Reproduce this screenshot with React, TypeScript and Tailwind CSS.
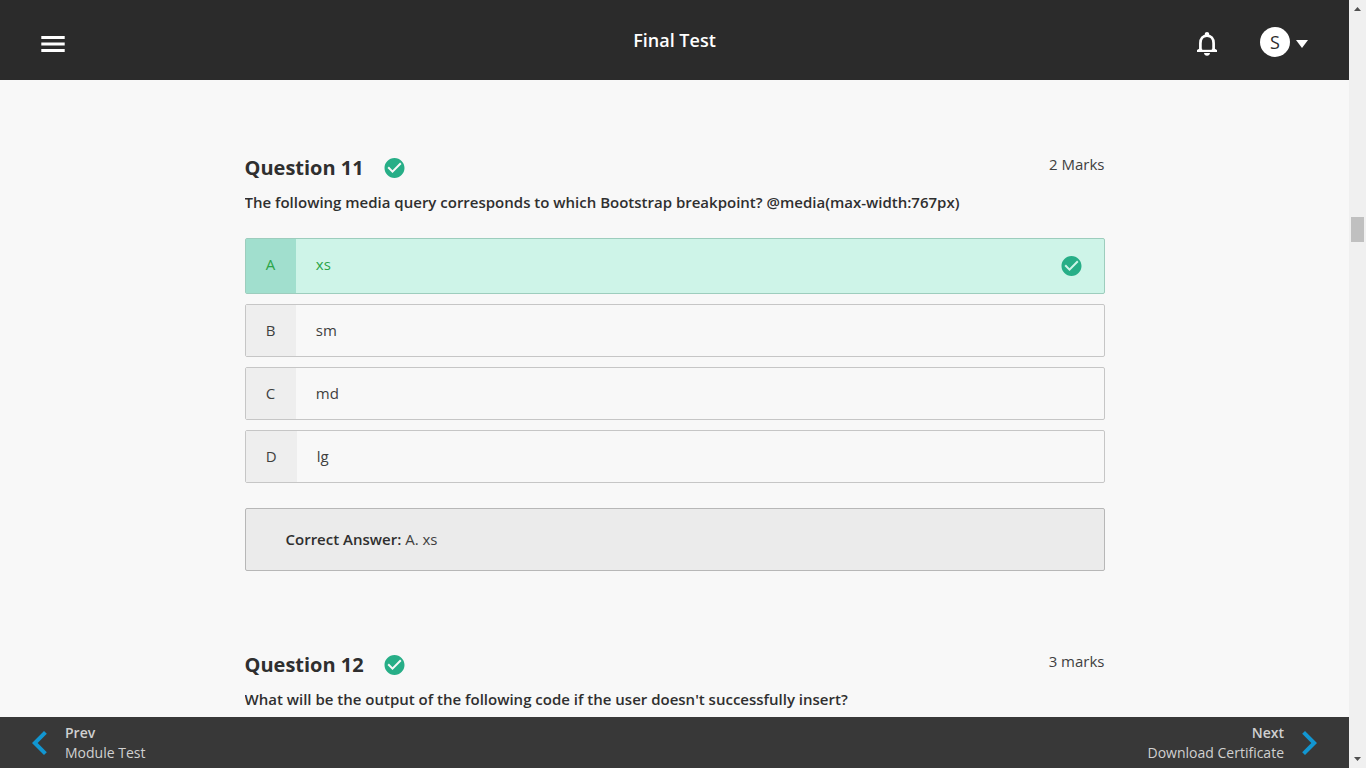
import React from "react";
import { MdCheckCircle, MdChevronLeft, MdChevronRight } from "react-icons/md";

type Option = { letter: string; text: string; correct?: boolean };

const options: Option[] = [
  { letter: "A", text: "xs", correct: true },
  { letter: "B", text: "sm" },
  { letter: "C", text: "md" },
  { letter: "D", text: "lg" },
];

function QuestionHead({ title, marks, text }: { title: string; marks: string; text: string }) {
  return (
    <>
      <div className="flex h-[26px] items-start">
        <h2 className="w-[137px] whitespace-nowrap text-[20px] leading-[26px] font-bold">{title}</h2>
        <MdCheckCircle className="mt-px h-[24px] w-[25px] text-[#27ae87]" />
        <span className="-mt-px ml-auto text-[15px] leading-[20px] text-[#3f3f3f]">{marks}</span>
      </div>
      <p className="mt-[10px] whitespace-nowrap text-[15px] leading-[22px] font-semibold">{text}</p>
    </>
  );
}

function OptionRow({ letter, text, correct }: Option) {
  return (
    <li
      className={
        correct
          ? "flex h-[56px] rounded-[2px] border border-[#9dcdbd] bg-[#cef4e8] text-[#2ba548]"
          : "flex h-[53px] rounded-[2px] border border-[#c6c6c6] text-[#3f3f3f]"
      }
    >
      <span
        className={
          (correct ? "bg-[#a1dfce] " : "bg-[#eeeeee] ") +
          (letter === "D" ? "w-[51px] " : "w-[50px] ") +
          "pt-[14px] pl-[20.3px] text-[15px] leading-[22px]"
        }
      >
        {letter}
      </span>
      <span className="pt-[14px] pl-[20.3px] text-[15px] leading-[22px]">{text}</span>
      {correct && <MdCheckCircle className="mt-[15px] mr-[20px] ml-auto h-[24px] w-[25px] text-[#27ae87]" />}
    </li>
  );
}

export default function App() {
  return (
    <div className="flex h-[768px] w-[1366px] overflow-hidden bg-[#f8f8f8] font-['Open_Sans',sans-serif] text-[#2f2f2f]">
      <div className="flex w-[1349px] flex-col">
        <header className="grid h-[80px] shrink-0 grid-cols-3 bg-[#2b2b2b] text-white">
          <svg className="mt-[36px] ml-[41px] h-[16px] w-[24px]" viewBox="0 0 24 16" fill="currentColor">
            <path d="M.3 0h23.4v3H.3zM.3 6.5h23.4v3H.3zM.3 13h23.4v3H.3z" />
          </svg>
          <h1 className="mt-[28px] text-center text-[18px] leading-[25px] font-semibold">Final Test</h1>
          <div className="flex justify-end pr-[41px]">
            <svg className="mt-[32px] h-[24px] w-[20px]" viewBox="0 0 20 24" fill="none">
              <path d="M3.4 19V11.2C3.4 6.6 6 3.6 10 3.6s6.6 3 6.6 7.6V19" stroke="currentColor" strokeWidth="2.7" />
              <path d="M10 0c1.3 0 2.2.9 2.2 2.1v1.6H7.8V2.1C7.8.9 8.7 0 10 0zM2.2 16.8L0 18v2h20v-2l-2.2-1.2z" fill="currentColor" />
              <path d="M5.2 12h9.6v5.8H5.2z" fill="#2b2b2b" />
              <path d="M7 21.1h6c0 1.5-1.3 2.7-3 2.7s-3-1.2-3-2.7z" fill="currentColor" />
            </svg>
            <div className="mt-[27px] ml-[43px] flex size-[30px] items-center justify-center rounded-full bg-white text-[18px] leading-none font-medium text-[#2b2b2b]">
              S
            </div>
            <svg className="mt-[40px] ml-[6px] h-[8px] w-[12px]" viewBox="0 0 12 8" fill="currentColor">
              <path d="M0 0h12L6 8z" />
            </svg>
          </div>
        </header>

        <main className="mx-auto h-[637px] w-[860px] shrink-0 overflow-hidden pt-[75px]">
          <section>
            <QuestionHead
              title="Question 11"
              marks="2 Marks"
              text="The following media query corresponds to which Bootstrap breakpoint? @media(max-width:767px)"
            />
            <ul className="mt-[25px] flex flex-col gap-[10px]">
              {options.map((o) => (
                <OptionRow key={o.letter} {...o} />
              ))}
            </ul>
            <div className="mt-[25px] h-[63px] rounded-[2px] border border-[#b7b7b7] bg-[#ebebeb] pt-[19px] pl-[40px] text-[15px] leading-[22px] text-[#3f3f3f]">
              <b className="font-semibold text-[#2f2f2f]">Correct Answer:</b> A. xs
            </div>
          </section>
          <section className="mt-[81px]">
            <QuestionHead
              title="Question 12"
              marks="3 marks"
              text="What will be the output of the following code if the user doesn't successfully insert?"
            />
          </section>
        </main>

        <footer className="flex h-[51px] shrink-0 justify-between bg-[#383838] text-[14px] leading-[20px] text-[#d0d0d0]">
          <div className="flex">
            <MdChevronLeft className="mt-[2px] ml-[16px] size-[48px] text-[#1296d1]" />
            <div className="ml-px pt-[6px]">
              <div className="font-semibold">Prev</div>
              <div>Module Test</div>
            </div>
          </div>
          <div className="flex">
            <div className="mr-px pt-[6px] text-right">
              <div className="font-semibold">Next</div>
              <div>Download Certificate</div>
            </div>
            <MdChevronRight className="mt-[2px] mr-[16px] size-[48px] text-[#1296d1]" />
          </div>
        </footer>
      </div>

      <div className="flex w-[17px] flex-col items-center bg-[#f0f0f0] text-[#505050]">
        <svg className="mt-[7px] h-[4px] w-[7px] shrink-0" viewBox="0 0 7 4" fill="currentColor">
          <path d="M3.5 0L7 4H0z" />
        </svg>
        <div className="mt-[206px] h-[25px] w-[13px] shrink-0 bg-[#c0c0c0]" />
        <svg className="mt-auto mb-[7px] h-[4px] w-[7px] shrink-0" viewBox="0 0 7 4" fill="currentColor">
          <path d="M0 0h7L3.5 4z" />
        </svg>
      </div>
    </div>
  );
}
